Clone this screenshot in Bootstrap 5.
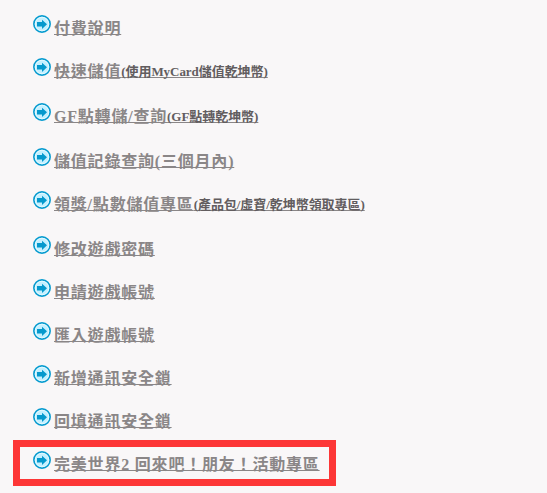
<!DOCTYPE html>
<html lang="zh-Hant">
<head>
    <meta charset="UTF-8">
    <meta name="viewport" content="width=device-width, initial-scale=1.0">
    <title>付費說明</title>
    <link href="https://cdn.jsdelivr.net/npm/bootstrap@5.3.0/dist/css/bootstrap.min.css" rel="stylesheet">
    <style>
        body {
            background: #f9f7f8;
            font-family: "Liberation Serif", "Noto Sans CJK TC", serif;
            overflow: hidden;
        }
        .service-menu {
            padding: 15px 0 0 33px;
        }
        .service-item {
            height: 43px;
            gap: 3px;
        }
        .service-item.taller {
            height: 45px;
        }
        .service-item.last {
            height: 32px;
        }
        .arrow {
            width: 18px;
            height: 18px;
        }
        .service-link {
            margin-top: 2px;
            color: #8a8687;
            font-size: 16px;
            font-weight: bold;
            line-height: 24px;
            letter-spacing: .8px;
            white-space: nowrap;
            text-decoration: underline;
            text-decoration-thickness: 1px;
            text-decoration-skip-ink: none;
            text-underline-offset: 0;
        }
        .service-link:hover {
            color: #555;
        }
        .note {
            color: #625d5f;
            font-size: 13px;
            line-height: 1;
            letter-spacing: -.05px;
            vertical-align: 1px;
        }
        .highlight {
            width: 323px;
            height: 46px;
            margin: -11px 0 0 -20px;
            padding: 4px 0 0 13px;
            border: 7px solid #fd3636;
        }
    </style>
</head>
<body>
    <!-- Arrow icon shared by all links -->
    <svg class="d-none">
        <symbol id="arrow" viewBox="0 0 18 18">
            <circle cx="9" cy="9" r="8.1" fill="#c4f0ff" stroke="#079bcf" stroke-width="1.7"/>
            <circle cx="9" cy="9" r="6.8" fill="none" stroke="#e6faff" stroke-width=".9"/>
            <path d="M4 7h5V4.7L14 9.2 9 13.9V11.6H4z" fill="#0599cd"/>
        </symbol>
    </svg>

    <ul class="service-menu list-unstyled mb-0">
        <li class="service-item d-flex align-items-start">
            <svg class="arrow flex-shrink-0"><use href="#arrow"/></svg>
            <a class="service-link" href="#">付費說明</a>
        </li>
        <li class="service-item taller d-flex align-items-start">
            <svg class="arrow flex-shrink-0"><use href="#arrow"/></svg>
            <a class="service-link" href="#">快速儲值<span class="note">(使用MyCard儲值乾坤幣)</span></a>
        </li>
        <li class="service-item taller d-flex align-items-start">
            <svg class="arrow flex-shrink-0"><use href="#arrow"/></svg>
            <a class="service-link" href="#">GF點轉儲/查詢<span class="note">(GF點轉乾坤幣)</span></a>
        </li>
        <li class="service-item d-flex align-items-start">
            <svg class="arrow flex-shrink-0"><use href="#arrow"/></svg>
            <a class="service-link" href="#">儲值記錄查詢(三個月內)</a>
        </li>
        <li class="service-item taller d-flex align-items-start">
            <svg class="arrow flex-shrink-0"><use href="#arrow"/></svg>
            <a class="service-link" href="#">領獎/點數儲值專區<span class="note">(產品包/虛寶/乾坤幣領取專區)</span></a>
        </li>
        <li class="service-item d-flex align-items-start">
            <svg class="arrow flex-shrink-0"><use href="#arrow"/></svg>
            <a class="service-link" href="#">修改遊戲密碼</a>
        </li>
        <li class="service-item d-flex align-items-start">
            <svg class="arrow flex-shrink-0"><use href="#arrow"/></svg>
            <a class="service-link" href="#">申請遊戲帳號</a>
        </li>
        <li class="service-item d-flex align-items-start">
            <svg class="arrow flex-shrink-0"><use href="#arrow"/></svg>
            <a class="service-link" href="#">匯入遊戲帳號</a>
        </li>
        <li class="service-item d-flex align-items-start">
            <svg class="arrow flex-shrink-0"><use href="#arrow"/></svg>
            <a class="service-link" href="#">新增通訊安全鎖</a>
        </li>
        <li class="service-item d-flex align-items-start">
            <svg class="arrow flex-shrink-0"><use href="#arrow"/></svg>
            <a class="service-link" href="#">回填通訊安全鎖</a>
        </li>
        <li class="highlight">
            <div class="service-item last d-flex align-items-start">
                <svg class="arrow flex-shrink-0"><use href="#arrow"/></svg>
                <a class="service-link" href="#">完美世界2 回來吧！朋友！活動專區</a>
            </div>
        </li>
    </ul>

    <script src="https://cdn.jsdelivr.net/npm/bootstrap@5.3.0/dist/js/bootstrap.bundle.min.js"></script>
</body>
</html>
